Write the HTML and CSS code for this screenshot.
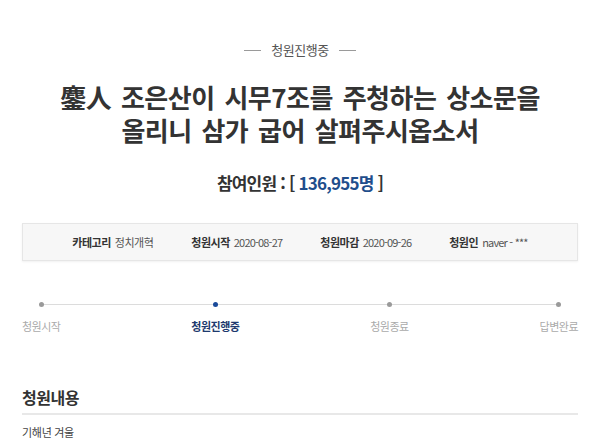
FILE: index.html
```html
<!DOCTYPE html>
<html lang="ko">
<head>
<meta charset="utf-8">
<link rel="stylesheet" href="styles.css">
</head>
<body>
<div class="page">
  <div class="status"><span class="dash"></span><span class="status-text">청원진행중</span><span class="dash"></span></div>
  <h1 class="title">鏖人 조은산이 시무7조를 주청하는 상소문을<br>올리니 삼가 굽어 살펴주시옵소서</h1>
  <div class="count">참여인원 : [ <span class="num">136,955명</span> ]</div>
  <ul class="info">
    <li><b>카테고리</b><span>정치개혁</span></li>
    <li><b>청원시작</b><span class="dt">2020-08-27</span></li>
    <li><b>청원마감</b><span class="dt">2020-09-26</span></li>
    <li><b>청원인</b><span class="dt">naver - ***</span></li>
  </ul>
  <ol class="steps">
    <li class="step"><i class="dot"></i><span>청원시작</span></li>
    <li class="step active"><i class="dot"></i><span>청원진행중</span></li>
    <li class="step"><i class="dot"></i><span>청원종료</span></li>
    <li class="step"><i class="dot"></i><span>답변완료</span></li>
  </ol>
  <h2 class="section">청원내용</h2>
  <p class="body-text">기해년 겨울</p>
</div>
</body>
</html>
```
FILE: styles.css
```css
* { box-sizing: border-box; }
html, body { margin: 0; padding: 0; background: #fff; }
body { font-family: "Noto Sans CJK KR", "Noto Sans", sans-serif; color: #333; }
.page { width: 600px; height: 448px; overflow: hidden; padding: 40px 22px 0; }
.status { display: flex; align-items: center; justify-content: center; gap: 10px; height: 20px; }
.dash { width: 17px; height: 1px; background: #9a9a9a; }
.status-text { font-size: 13px; line-height: 20px; color: #555; letter-spacing: -0.5px; }
.title { margin: 20px 0 0; text-align: center; font-size: 26px; line-height: 33px; font-weight: 700; color: #333; letter-spacing: -0.5px; word-spacing: 3px; }
.count { margin-top: 25px; text-align: center; font-size: 17px; line-height: 24px; font-weight: 700; color: #333; letter-spacing: -0.8px; }
.count .num { color: #1f4e8c; }
.info { list-style: none; margin: 28px 0 0; padding: 0; height: 38px; border: 1px solid #e6e6e6; background: #f7f7f7; box-shadow: 0 1px 2px rgba(0,0,0,0.06); display: flex; align-items: center; justify-content: center; gap: 38px; font-size: 11px; letter-spacing: -0.5px; }
.info li { display: flex; gap: 4px; align-items: center; }
.info b { font-weight: 700; color: #333; }
.info span { color: #555; }
.info .dt { letter-spacing: -0.8px; }
.steps { list-style: none; margin: 41px 0 0; padding: 0; display: flex; justify-content: space-between; position: relative; }
.steps::before { content: ""; position: absolute; left: 19px; right: 20px; top: 2px; height: 1px; background: #dcdcdc; }
.step { display: flex; flex-direction: column; align-items: center; position: relative; }
.dot { display: block; width: 5px; height: 5px; border-radius: 50%; background: #9a9a9a; }
.step span { margin-top: 11px; font-size: 11px; line-height: 16px; color: #aaa; letter-spacing: -0.5px; }
.step.active .dot { background: #1a4a9a; }
.step.active span { color: #1e3a6e; font-weight: 700; }
.section { margin: 52px 0 0; padding-bottom: 5px; font-size: 16px; line-height: 22px; font-weight: 700; color: #333; border-bottom: 2px solid #e8e8e8; letter-spacing: -0.5px; }
.body-text { margin: 9px 0 0; font-size: 11px; line-height: 16px; color: #444; letter-spacing: -0.3px; }
```
